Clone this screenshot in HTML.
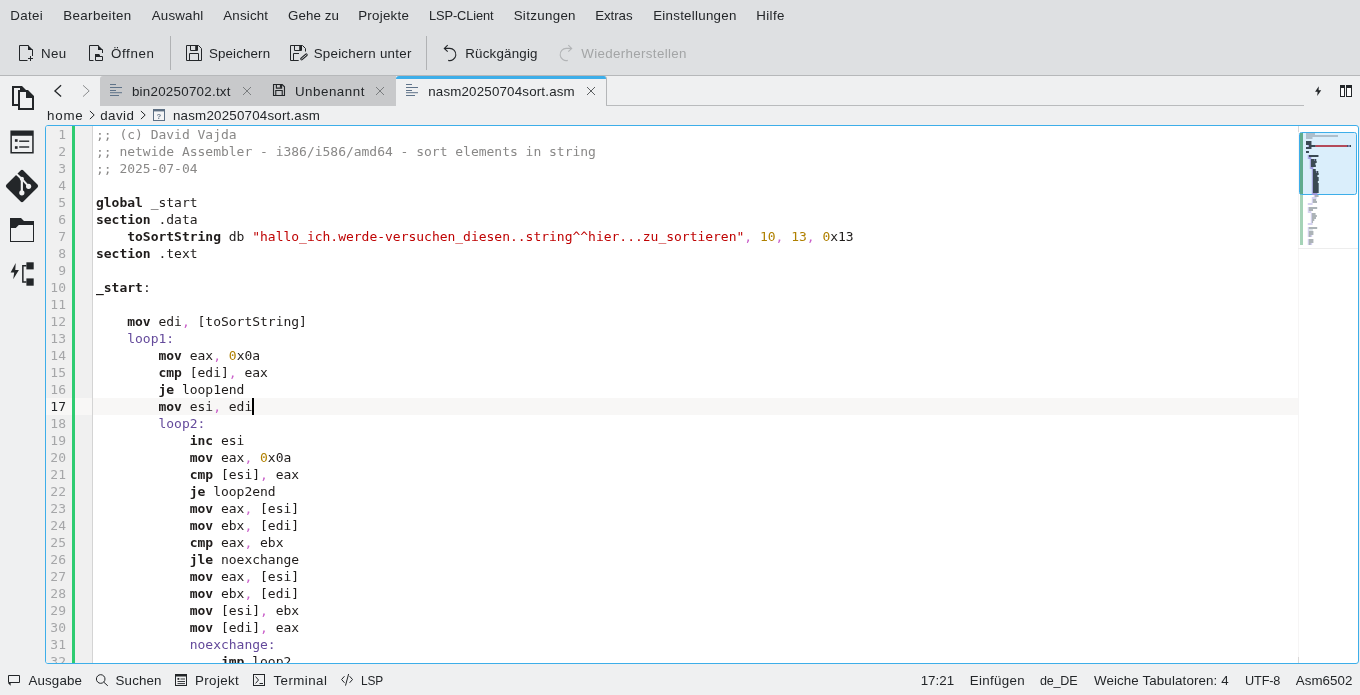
<!DOCTYPE html>
<html lang="de">
<head>
<meta charset="utf-8">
<title>nasm20250704sort.asm — Kate</title>
<style>
*{box-sizing:border-box;margin:0;padding:0}
html,body{width:1360px;height:695px;overflow:hidden}
body{position:relative;background:#eff0f1;font-family:"Liberation Sans","DejaVu Sans",sans-serif;font-size:13.333px;color:#232629;line-height:16px}
#wrap{position:absolute;left:0;top:0;width:1360px;height:695px;will-change:transform}
#header{position:absolute;left:0;top:0;width:1360px;height:75px;background:#dee0e2}
#hline{position:absolute;left:0;top:75px;width:1360px;height:1px;background:#b6b8ba}
.t{position:absolute;white-space:pre;height:16px;line-height:16px;transform-origin:0 50%}
.dis{color:#a3a5a6}
.vsep{position:absolute;width:1px;background:#b0b2b4;top:36px;height:34px}
/* tabs */
#tabsbg{position:absolute;left:100px;top:76px;width:296px;height:30px;background:#c8c9cb;border-top-left-radius:3px}
#tabact{position:absolute;left:396px;top:76px;width:211px;height:30px;background:#eff0f1;border-right:1px solid #b4b6b8;border-top-left-radius:3px;border-top-right-radius:3px;overflow:hidden}
#tabact:before{content:"";position:absolute;left:0;top:0;width:211px;height:3px;background:#3daee9}
#tabline{position:absolute;left:606px;top:105px;width:698px;height:1px;background:#b9bbbd}
/* editor */
#ed{position:absolute;left:45px;top:125px;width:1314px;height:539px;border:1px solid #3daee9;border-radius:3px;background:#fff;overflow:hidden}
#gutter{position:absolute;left:0;top:0;width:46px;height:537px;background:#f0f0f0}
#gsep{position:absolute;left:46px;top:0;width:1px;height:537px;background:#d4d4d4}
#green{position:absolute;left:26px;top:0;width:3px;height:537px;background:#2ecc71}
#nums{position:absolute;left:0;top:0;width:20px}
#gcur{position:absolute;left:0;top:272px;width:46px;height:17px;background:#f8f7f6}
.ln{height:17px;line-height:17px;text-align:right;font-family:"DejaVu Sans Mono","Liberation Mono",monospace;font-size:13px;color:#a5a6a8}
.ln.cur{color:#232629}
#code{position:absolute;left:50px;top:0;width:1202px}
.cl{height:17px;line-height:17px;white-space:pre;letter-spacing:-0.016px;font-family:"DejaVu Sans Mono","Liberation Mono",monospace;font-size:13px;color:#1f1c1b}
.cl.curl{background:#f8f7f6;margin-left:-3px;padding-left:3px}
.k{font-weight:bold}
.c{color:#898887}
.s{color:#bf0303}
.d{color:#b08000}
.o{color:#ca60ca}
.l{color:#644a9b}
.caret{position:absolute;left:156px;top:272px;width:2px;height:17px;background:#000}
#mmsep{position:absolute;left:1252px;top:0;width:1px;height:537px;background:linear-gradient(#d9d7d7 0,#d9d7d7 6px,#f6f5f5 6px,#f6f5f5 531px,#d9d7d7 531px)}
#mm{position:absolute;left:1253px;top:0;width:59px;height:537px}
#status{position:absolute;left:0;top:664px;width:1360px;height:32px;background:#eff0f1}
svg{position:absolute;overflow:visible}
</style>
</head>
<body>
<div id="wrap">
<div id="header"></div>
<div id="hline"></div>

<!-- menu -->

<!-- toolbar -->
<div class="vsep" style="left:170px"></div>
<div class="vsep" style="left:426px"></div>

<!-- tabs -->
<div id="tabsbg"></div>
<div id="tabact"></div>
<div id="tabline"></div>

<!-- breadcrumb -->

<!-- editor -->
<div id="ed">
  <div id="gutter"></div>
  <div id="gcur"></div>
  <div id="green"></div>
  <div id="gsep"></div>
  <div id="nums">
<div class="ln">1</div>
<div class="ln">2</div>
<div class="ln">3</div>
<div class="ln">4</div>
<div class="ln">5</div>
<div class="ln">6</div>
<div class="ln">7</div>
<div class="ln">8</div>
<div class="ln">9</div>
<div class="ln">10</div>
<div class="ln">11</div>
<div class="ln">12</div>
<div class="ln">13</div>
<div class="ln">14</div>
<div class="ln">15</div>
<div class="ln">16</div>
<div class="ln cur">17</div>
<div class="ln">18</div>
<div class="ln">19</div>
<div class="ln">20</div>
<div class="ln">21</div>
<div class="ln">22</div>
<div class="ln">23</div>
<div class="ln">24</div>
<div class="ln">25</div>
<div class="ln">26</div>
<div class="ln">27</div>
<div class="ln">28</div>
<div class="ln">29</div>
<div class="ln">30</div>
<div class="ln">31</div>
<div class="ln">32</div>
  </div>
  <div id="code">
<div class="cl"><span class="c">;; (c) David Vajda</span></div>
<div class="cl"><span class="c">;; netwide Assembler - i386/i586/amd64 - sort elements in string</span></div>
<div class="cl"><span class="c">;; 2025-07-04</span></div>
<div class="cl"></div>
<div class="cl"><span class="k">global</span> _start</div>
<div class="cl"><span class="k">section</span> .data</div>
<div class="cl">    <span class="k">toSortString</span> db <span class="s">"hallo_ich.werde-versuchen_diesen..string^^hier...zu_sortieren"</span><span class="o">,</span> <span class="d">10</span><span class="o">,</span> <span class="d">13</span><span class="o">,</span> <span class="d">0</span>x13</div>
<div class="cl"><span class="k">section</span> .text</div>
<div class="cl"></div>
<div class="cl"><span class="k">_start</span>:</div>
<div class="cl"></div>
<div class="cl">    <span class="k">mov</span> edi<span class="o">,</span> [toSortString]</div>
<div class="cl">    <span class="l">loop1:</span></div>
<div class="cl">        <span class="k">mov</span> eax<span class="o">,</span> <span class="d">0</span>x0a</div>
<div class="cl">        <span class="k">cmp</span> [edi]<span class="o">,</span> eax</div>
<div class="cl">        <span class="k">je</span> loop1end</div>
<div class="cl curl">        <span class="k">mov</span> esi<span class="o">,</span> edi<i class="caret"></i></div>
<div class="cl">        <span class="l">loop2:</span></div>
<div class="cl">            <span class="k">inc</span> esi</div>
<div class="cl">            <span class="k">mov</span> eax<span class="o">,</span> <span class="d">0</span>x0a</div>
<div class="cl">            <span class="k">cmp</span> [esi]<span class="o">,</span> eax</div>
<div class="cl">            <span class="k">je</span> loop2end</div>
<div class="cl">            <span class="k">mov</span> eax<span class="o">,</span> [esi]</div>
<div class="cl">            <span class="k">mov</span> ebx<span class="o">,</span> [edi]</div>
<div class="cl">            <span class="k">cmp</span> eax<span class="o">,</span> ebx</div>
<div class="cl">            <span class="k">jle</span> noexchange</div>
<div class="cl">            <span class="k">mov</span> eax<span class="o">,</span> [esi]</div>
<div class="cl">            <span class="k">mov</span> ebx<span class="o">,</span> [edi]</div>
<div class="cl">            <span class="k">mov</span> [esi]<span class="o">,</span> ebx</div>
<div class="cl">            <span class="k">mov</span> [edi]<span class="o">,</span> eax</div>
<div class="cl">            <span class="l">noexchange:</span></div>
<div class="cl">                <span class="k">jmp</span> loop2</div>
  </div>
  <div id="mmsep"></div>
  <div id="mm"></div>
</div>

<!-- status -->
<div id="status"></div>
<span class="t" style="left:10.30px;top:8px;letter-spacing:0.332px">Datei</span>
<span class="t" style="left:63.15px;top:8px;letter-spacing:0.401px">Bearbeiten</span>
<span class="t" style="left:151.82px;top:8px;letter-spacing:0.170px">Auswahl</span>
<span class="t" style="left:223.32px;top:8px;letter-spacing:0.167px">Ansicht</span>
<span class="t" style="left:287.94px;top:8px;letter-spacing:0.086px">Gehe zu</span>
<span class="t" style="left:358.15px;top:8px;letter-spacing:0.265px">Projekte</span>
<span class="t" style="left:428.90px;top:8px;letter-spacing:-0.121px;transform:scaleX(0.9622)">LSP-CLient</span>
<span class="t" style="left:513.65px;top:8px;letter-spacing:0.326px">Sitzungen</span>
<span class="t" style="left:595.20px;top:8px;letter-spacing:-0.073px">Extras</span>
<span class="t" style="left:653.15px;top:8px;letter-spacing:0.268px">Einstellungen</span>
<span class="t" style="left:756.20px;top:8px;letter-spacing:0.398px">Hilfe</span>
<span class="t" style="left:40.90px;top:46px;letter-spacing:0.460px">Neu</span>
<span class="t" style="left:110.99px;top:46px;letter-spacing:0.620px">Öffnen</span>
<span class="t" style="left:208.90px;top:46px;letter-spacing:0.149px">Speichern</span>
<span class="t" style="left:313.65px;top:46px;letter-spacing:0.259px">Speichern unter</span>
<span class="t" style="left:465.30px;top:46px;letter-spacing:0.199px">Rückgängig</span>
<span class="t dis" style="left:581.36px;top:46px;letter-spacing:0.334px">Wiederherstellen</span>
<span class="t" style="left:131.90px;top:84px;letter-spacing:0.267px">bin20250702.txt</span>
<span class="t" style="left:294.90px;top:84px;letter-spacing:0.532px">Unbenannt</span>
<span class="t" style="left:428.20px;top:84px;letter-spacing:0.185px">nasm20250704sort.asm</span>
<span class="t" style="left:47.00px;top:108px;letter-spacing:0.806px">home</span>
<span class="t" style="left:100.27px;top:108px;letter-spacing:0.422px">david</span>
<span class="t" style="left:173.00px;top:108px;letter-spacing:0.208px">nasm20250704sort.asm</span>
<span class="t" style="left:28.57px;top:673px;letter-spacing:0.115px">Ausgabe</span>
<span class="t" style="left:115.60px;top:673px;letter-spacing:0.124px">Suchen</span>
<span class="t" style="left:195.00px;top:673px;letter-spacing:0.383px">Projekt</span>
<span class="t" style="left:273.54px;top:673px;letter-spacing:0.423px">Terminal</span>
<span class="t" style="left:361.20px;top:673px;letter-spacing:-0.099px;transform:scaleX(0.8921)">LSP</span>
<span class="t" style="left:920.70px;top:673px">17:21</span>
<span class="t" style="left:969.70px;top:673px;letter-spacing:0.350px">Einfügen</span>
<span class="t" style="left:1040.12px;top:673px;letter-spacing:-0.233px;transform:scaleX(0.9437)">de_DE</span>
<span class="t" style="left:1093.91px;top:673px;letter-spacing:0.131px">Weiche Tabulatoren: 4</span>
<span class="t" style="left:1244.80px;top:673px;letter-spacing:-0.158px;transform:scaleX(0.9532)">UTF-8</span>
<span class="t" style="left:1295.77px;top:673px;letter-spacing:0.065px">Asm6502</span>
<svg id="icons" width="1360" height="695" viewBox="0 0 1360 695" style="left:0;top:0">
<g fill="none" stroke="#232629" stroke-width="1">
 <!-- toolbar: Neu -->
 <path d="M28.5,45.5H19.5V60.5H27.5M32.5,49.5V56"/>
 <path d="M28,45L33,50H28Z" fill="#232629" stroke="none"/>
 <path d="M28,58.5H33M30.5,56V61"/>
 <!-- toolbar: Oeffnen -->
 <path d="M98.5,45.5H89.5V60.5H93.5M102.5,49.5V53"/>
 <path d="M98,45L103,50H98Z" fill="#232629" stroke="none"/>
 <path d="M95.5,56.5H102.5V60.5H95.5Z"/>
 <path d="M95,54H99L100,55V57H95Z" fill="#232629" stroke="none"/>
 <!-- toolbar: Speichern -->
 <g transform="translate(186,45)">
  <path d="M0.5,0.5H12.5L15.5,3.5V15.5H0.5Z"/>
  <path d="M4.5,0.5V5.5H11.5V0.5"/>
  <path d="M9.2,1H11.5V5H9.2Z" fill="#232629" stroke="none"/>
  <path d="M3.5,15.5V8.5H12.5V15.5"/>
 </g>
 <!-- toolbar: Speichern unter -->
 <g transform="translate(290,45)">
  <path d="M8.7,15.5H0.5V0.5H12.5L15.5,3.5V6.5"/>
  <path d="M4.5,0.5V5.5H11.5V0.5"/>
  <path d="M9.2,1H11.5V5H9.2Z" fill="#232629" stroke="none"/>
  <path d="M3.5,15.5V8.5H9"/>
  <path d="M11.6,13.9L16.3,9.9" stroke-width="2.9" stroke-linecap="round"/>
  <path d="M11.6,13.9L16.3,9.9" stroke="#dee0e2" stroke-width="0.9" stroke-linecap="round"/>
 </g>
 <!-- undo -->
 <path d="M447.7,45.1L444.3,48.4L447.7,51.7M444.5,48.4H449.6A6.1,6.1 0 1 1 448.2,60.4" stroke-width="1.1"/>
 <!-- redo (disabled) -->
 <path d="M568.3,45.1L571.7,48.4L568.3,51.7M571.5,48.4H566.4A6.1,6.1 0 1 0 567.8,60.4" stroke="#b2b4b6" stroke-width="1.1"/>
 <!-- nav arrows -->
 <path d="M61.1,85.3L54.9,90.9L61.1,96.6" stroke-width="1.3"/>
 <path d="M83,85.3L89.2,90.9L83,96.6" stroke="#8a8c8e" stroke-width="1"/>
</g>

<!-- tab icons -->
<g fill="#5f7389">
 <g id="tl1"><rect x="110" y="84" width="6" height="1"/><rect x="110" y="87" width="12" height="1"/><rect x="110" y="90" width="6" height="1"/><rect x="110" y="92.2" width="12" height="1"/><rect x="110" y="95" width="9" height="1"/></g>
 <g transform="translate(296,0)"><rect x="110" y="84" width="6" height="1"/><rect x="110" y="87" width="12" height="1"/><rect x="110" y="90" width="6" height="1"/><rect x="110" y="92.2" width="12" height="1"/><rect x="110" y="95" width="9" height="1"/></g>
</g>
<!-- tab2 floppy 12px -->
<g transform="translate(273,84) scale(0.75)" fill="none" stroke="#232629" stroke-width="1.5">
  <path d="M0.7,0.7H12.3L15.3,3.7V15.3H0.7Z"/>
  <path d="M4.5,0.7V5.5H11.5V0.7"/>
  <path d="M9.2,1H11.5V5H9.2Z" fill="#232629" stroke="none"/>
  <path d="M3.7,15.3V8.7H12.3V15.3"/>
</g>
<!-- tab close buttons -->
<g fill="none" stroke="#7a7d7f" stroke-width="1">
 <path d="M243,87L251,95M251,87L243,95"/>
 <path d="M376,87L384,95M384,87L376,95"/>
 <path d="M587,87L595,95M595,87L587,95" stroke="#5c5f61"/>
</g>
<!-- right of tab bar: bolt + split -->
<path d="M1318.8,86.3L1315.1,91.8H1317.6L1317.2,95.9L1321.2,90.3H1318.6Z" fill="#232629"/>
<g fill="#fcfcfc" stroke="#232629" stroke-width="1">
 <rect x="1340.5" y="85.5" width="4" height="11"/>
 <rect x="1346.5" y="85.5" width="5" height="11"/>
</g>
<rect x="1340" y="85" width="5" height="3" fill="#232629"/>
<rect x="1346" y="85" width="6" height="3" fill="#232629"/>
<!-- breadcrumb -->
<g fill="none" stroke="#232629" stroke-width="1">
 <path d="M89.9,111L94.2,115L89.9,119.1"/>
 <path d="M140.9,111L145.2,115L140.9,119.1"/>
</g>
<g>
 <rect x="153.5" y="109.5" width="11" height="11" fill="#f4f5f6" stroke="#5d6f83"/>
 <rect x="153" y="109" width="12" height="2.4" fill="#5d6f83"/>
 <text x="159" y="118.6" font-family="Liberation Sans,DejaVu Sans,sans-serif" font-size="7.8" font-weight="bold" fill="#6b7b8d" text-anchor="middle">?</text>
</g>

<!-- sidebar icons -->
<g fill="#232629" fill-rule="evenodd">
 <!-- documents -->
 <path d="M12,86H22L26,90H18V106H12ZM14,88V104H18V90H20V88Z"/>
 <path d="M18,90H28L34,96V110H18ZM20,92V108H32V98H26V92Z"/>
 <!-- list -->
 <path d="M10.4,130.4H33.7V153.6H10.4ZM11.9,135.7V152.1H32.2V135.7Z"/>
 <rect x="14.9" y="139.2" width="2.7" height="2.6"/><rect x="14.9" y="146.2" width="2.7" height="2.6"/>
 <rect x="19.2" y="140.5" width="10" height="1.4"/><rect x="19.2" y="146.3" width="10" height="1.4"/>
 <!-- git -->
 <rect x="-11.95" y="-11.95" width="23.9" height="23.9" rx="2" transform="translate(22,186) rotate(45)"/>
 <!-- folder -->
 <path d="M10,218H21L24,221H34V242H10ZM11,228V241H33V225H18.8L15.8,228Z"/>
 <!-- lsp -->
 <path d="M15.7,263L10.6,272.4H14.2L13.2,279.3L18.9,269.9H15.3Z"/>
 <rect x="26.4" y="262.3" width="7.3" height="7.1"/><rect x="26.4" y="278.4" width="7.3" height="7.3"/>
 <path d="M22.1,265H26.4V266.5H23.6V281.2H26.4V282.7H22.1Z"/>
</g>
<g stroke="#eff0f1" fill="#eff0f1" stroke-linecap="butt">
 <path d="M15.6,173.3L21.85,179" stroke-width="2" fill="none"/>
 <path d="M21.85,178V192.8" stroke-width="2.2" fill="none"/>
 <path d="M22.3,179.4L28.6,186.3" stroke-width="2" fill="none"/>
 <circle cx="21.85" cy="192.8" r="2.6" stroke="none"/><circle cx="28.6" cy="186.3" r="2.6" stroke="none"/><circle cx="21.85" cy="178.8" r="2.1" stroke="none"/>
</g>
<!-- status icons -->
<g fill="none" stroke="#232629" stroke-width="1">
 <path d="M8.5,675.5H19.5V682.5H8.5Z"/>
 <path d="M8,683L10.6,685.8V683Z" fill="#232629" stroke="none"/>
 <circle cx="100.7" cy="679" r="4.3"/><path d="M103.8,682.2L107.8,685.8"/>
 <rect x="175.5" y="674.5" width="11" height="11"/><rect x="175" y="674" width="12" height="2.5" fill="#232629" stroke="none"/>
 <rect x="177.5" y="678" width="1.8" height="1.8" fill="#232629" stroke="none"/>
 <path d="M180.5,679H185M177.5,681.5H185M177.5,683.6H185" stroke-width="0.9"/>
 <rect x="253.5" y="674.5" width="11" height="11"/>
 <path d="M255.6,676.6L258.5,680L255.6,683.4M259.5,683.5H263"/>
 <path d="M344.5,676.2L341.6,679.5L344.5,682.8M348.6,674L345.5,685.6M349.6,676.2L352.5,679.5L349.6,682.8"/>
</g>

<!-- minimap -->
<rect x="1298" y="248" width="60" height="1" fill="#ededed"/>
<rect x="1300" y="133" width="3" height="112" fill="#a5d3b7"/>
<rect x="1299.5" y="132.5" width="57" height="62" rx="2" ry="2" fill="#daeefb" stroke="#3daee9"/>
<rect x="1300" y="133" width="3" height="61" fill="#5fab8d"/>
<g shape-rendering="auto">
<rect x="1306.00" y="133.0" width="9.00" height="2.0" fill="#adbecb"/>
<rect x="1306.00" y="135.0" width="32.00" height="2.0" fill="#adbecb"/>
<rect x="1306.00" y="137.0" width="6.50" height="2.0" fill="#adbecb"/>
<rect x="1306.00" y="141.0" width="5.46" height="2.0" fill="#3a4953"/>
<rect x="1306.00" y="143.0" width="5.46" height="2.0" fill="#3a4953"/>
<rect x="1308.80" y="145.0" width="6.97" height="2.0" fill="#3a4953"/>
<rect x="1315.52" y="145.0" width="31.75" height="2.0" fill="#b44a5a"/>
<rect x="1347.02" y="145.0" width="1.09" height="2.0" fill="#3a4953"/>
<rect x="1347.86" y="145.0" width="1.09" height="2.0" fill="#9b97dc"/>
<rect x="1348.70" y="145.0" width="1.09" height="2.0" fill="#3a4953"/>
<rect x="1349.54" y="145.0" width="1.09" height="2.0" fill="#9b97dc"/>
<rect x="1350.38" y="145.0" width="0.62" height="2.0" fill="#3a4953"/>
<rect x="1307.80" y="145.0" width="1" height="2.0" fill="#9b97dc" opacity="0.9"/>
<rect x="1306.00" y="147.0" width="5.46" height="2.0" fill="#3a4953"/>
<rect x="1306.00" y="151.0" width="2.94" height="2.0" fill="#3a4953"/>
<rect x="1308.80" y="155.0" width="9.66" height="2.0" fill="#3a4953"/>
<rect x="1307.80" y="155.0" width="1" height="2.0" fill="#9b97dc" opacity="0.9"/>
<rect x="1308.80" y="157.0" width="2.52" height="2.0" fill="#9b97dc"/>
<rect x="1307.80" y="157.0" width="1" height="2.0" fill="#9b97dc" opacity="0.9"/>
<rect x="1310.80" y="159.0" width="4.03" height="2.0" fill="#3a4953"/>
<rect x="1314.58" y="159.0" width="0.67" height="2.0" fill="#9b97dc"/>
<rect x="1315.00" y="159.0" width="1.26" height="2.0" fill="#3a4953"/>
<rect x="1309.80" y="159.0" width="1" height="2.0" fill="#9b97dc" opacity="0.9"/>
<rect x="1310.80" y="161.0" width="5.88" height="2.0" fill="#3a4953"/>
<rect x="1309.80" y="161.0" width="1" height="2.0" fill="#9b97dc" opacity="0.9"/>
<rect x="1310.80" y="163.0" width="4.62" height="2.0" fill="#3a4953"/>
<rect x="1309.80" y="163.0" width="1" height="2.0" fill="#9b97dc" opacity="0.9"/>
<rect x="1310.80" y="165.0" width="5.04" height="2.0" fill="#3a4953"/>
<rect x="1309.80" y="165.0" width="1" height="2.0" fill="#9b97dc" opacity="0.9"/>
<rect x="1310.80" y="167.0" width="2.52" height="2.0" fill="#9b97dc"/>
<rect x="1309.80" y="167.0" width="1" height="2.0" fill="#9b97dc" opacity="0.9"/>
<rect x="1312.80" y="169.0" width="2.94" height="2.0" fill="#3a4953"/>
<rect x="1311.80" y="169.0" width="1" height="2.0" fill="#9b97dc" opacity="0.9"/>
<rect x="1312.80" y="171.0" width="4.03" height="2.0" fill="#3a4953"/>
<rect x="1316.58" y="171.0" width="0.67" height="2.0" fill="#9b97dc"/>
<rect x="1317.00" y="171.0" width="1.26" height="2.0" fill="#3a4953"/>
<rect x="1311.80" y="171.0" width="1" height="2.0" fill="#9b97dc" opacity="0.9"/>
<rect x="1312.80" y="173.0" width="5.88" height="2.0" fill="#3a4953"/>
<rect x="1311.80" y="173.0" width="1" height="2.0" fill="#9b97dc" opacity="0.9"/>
<rect x="1312.80" y="175.0" width="4.62" height="2.0" fill="#3a4953"/>
<rect x="1311.80" y="175.0" width="1" height="2.0" fill="#9b97dc" opacity="0.9"/>
<rect x="1312.80" y="177.0" width="5.88" height="2.0" fill="#3a4953"/>
<rect x="1311.80" y="177.0" width="1" height="2.0" fill="#9b97dc" opacity="0.9"/>
<rect x="1312.80" y="179.0" width="5.88" height="2.0" fill="#3a4953"/>
<rect x="1311.80" y="179.0" width="1" height="2.0" fill="#9b97dc" opacity="0.9"/>
<rect x="1312.80" y="181.0" width="5.04" height="2.0" fill="#3a4953"/>
<rect x="1311.80" y="181.0" width="1" height="2.0" fill="#9b97dc" opacity="0.9"/>
<rect x="1312.80" y="183.0" width="5.88" height="2.0" fill="#3a4953"/>
<rect x="1311.80" y="183.0" width="1" height="2.0" fill="#9b97dc" opacity="0.9"/>
<rect x="1312.80" y="185.0" width="5.88" height="2.0" fill="#3a4953"/>
<rect x="1311.80" y="185.0" width="1" height="2.0" fill="#9b97dc" opacity="0.9"/>
<rect x="1312.80" y="187.0" width="5.88" height="2.0" fill="#3a4953"/>
<rect x="1311.80" y="187.0" width="1" height="2.0" fill="#9b97dc" opacity="0.9"/>
<rect x="1312.80" y="189.0" width="5.88" height="2.0" fill="#3a4953"/>
<rect x="1311.80" y="189.0" width="1" height="2.0" fill="#9b97dc" opacity="0.9"/>
<rect x="1312.80" y="191.0" width="5.88" height="2.0" fill="#3a4953"/>
<rect x="1311.80" y="191.0" width="1" height="2.0" fill="#9b97dc" opacity="0.9"/>
<rect x="1312.80" y="193.0" width="4.62" height="2.0" fill="#9b97dc"/>
<rect x="1311.80" y="193.0" width="1" height="2.0" fill="#9b97dc" opacity="0.9"/>
<rect x="1314.80" y="195.0" width="3.78" height="2.0" fill="#3a4953" opacity="0.42"/>
<rect x="1313.80" y="195.0" width="1" height="2.0" fill="#9b97dc" opacity="0.45"/>
<rect x="1312.80" y="197.0" width="3.78" height="2.0" fill="#9b97dc" opacity="0.42"/>
<rect x="1311.80" y="197.0" width="1" height="2.0" fill="#9b97dc" opacity="0.45"/>
<rect x="1312.80" y="199.0" width="3.36" height="2.0" fill="#3a4953" opacity="0.42"/>
<rect x="1311.80" y="199.0" width="1" height="2.0" fill="#9b97dc" opacity="0.45"/>
<rect x="1312.80" y="201.0" width="4.20" height="2.0" fill="#3a4953" opacity="0.42"/>
<rect x="1311.80" y="201.0" width="1" height="2.0" fill="#9b97dc" opacity="0.45"/>
<rect x="1308.80" y="203.0" width="3.78" height="2.0" fill="#9b97dc" opacity="0.42"/>
<rect x="1307.80" y="203.0" width="1" height="2.0" fill="#9b97dc" opacity="0.45"/>
<rect x="1308.80" y="207.0" width="8.40" height="2.0" fill="#3a4953" opacity="0.42"/>
<rect x="1307.80" y="207.0" width="1" height="2.0" fill="#9b97dc" opacity="0.45"/>
<rect x="1308.80" y="209.0" width="4.20" height="2.0" fill="#3a4953" opacity="0.42"/>
<rect x="1307.80" y="209.0" width="1" height="2.0" fill="#9b97dc" opacity="0.45"/>
<rect x="1308.80" y="211.0" width="2.52" height="2.0" fill="#9b97dc" opacity="0.42"/>
<rect x="1307.80" y="211.0" width="1" height="2.0" fill="#9b97dc" opacity="0.45"/>
<rect x="1311.80" y="213.0" width="3.78" height="2.0" fill="#3a4953" opacity="0.42"/>
<rect x="1310.80" y="213.0" width="1" height="2.0" fill="#9b97dc" opacity="0.45"/>
<rect x="1311.80" y="215.0" width="5.04" height="2.0" fill="#3a4953" opacity="0.42"/>
<rect x="1310.80" y="215.0" width="1" height="2.0" fill="#9b97dc" opacity="0.45"/>
<rect x="1311.80" y="217.0" width="4.20" height="2.0" fill="#3a4953" opacity="0.42"/>
<rect x="1310.80" y="217.0" width="1" height="2.0" fill="#9b97dc" opacity="0.45"/>
<rect x="1311.80" y="219.0" width="2.52" height="2.0" fill="#3a4953" opacity="0.42"/>
<rect x="1310.80" y="219.0" width="1" height="2.0" fill="#9b97dc" opacity="0.45"/>
<rect x="1311.80" y="221.0" width="1.26" height="2.0" fill="#3a4953" opacity="0.42"/>
<rect x="1310.80" y="221.0" width="1" height="2.0" fill="#9b97dc" opacity="0.45"/>
<rect x="1308.80" y="223.0" width="3.78" height="2.0" fill="#9b97dc" opacity="0.42"/>
<rect x="1307.80" y="223.0" width="1" height="2.0" fill="#9b97dc" opacity="0.45"/>
<rect x="1308.80" y="227.0" width="8.40" height="2.0" fill="#3a4953" opacity="0.42"/>
<rect x="1307.80" y="227.0" width="1" height="2.0" fill="#9b97dc" opacity="0.45"/>
<rect x="1308.80" y="229.0" width="4.00" height="2.0" fill="#adbecb" opacity="0.42"/>
<rect x="1307.80" y="229.0" width="1" height="2.0" fill="#9b97dc" opacity="0.45"/>
<rect x="1308.80" y="231.0" width="4.62" height="2.0" fill="#3a4953" opacity="0.42"/>
<rect x="1307.80" y="231.0" width="1" height="2.0" fill="#9b97dc" opacity="0.45"/>
<rect x="1308.80" y="233.0" width="4.62" height="2.0" fill="#3a4953" opacity="0.42"/>
<rect x="1307.80" y="233.0" width="1" height="2.0" fill="#9b97dc" opacity="0.45"/>
<rect x="1308.80" y="235.0" width="1.93" height="2.0" fill="#3a4953" opacity="0.42"/>
<rect x="1310.48" y="235.0" width="1.68" height="2.0" fill="#9b97dc" opacity="0.42"/>
<rect x="1307.80" y="235.0" width="1" height="2.0" fill="#9b97dc" opacity="0.45"/>
<rect x="1308.80" y="239.0" width="4.62" height="2.0" fill="#3a4953" opacity="0.42"/>
<rect x="1307.80" y="239.0" width="1" height="2.0" fill="#9b97dc" opacity="0.45"/>
<rect x="1308.80" y="241.0" width="4.62" height="2.0" fill="#3a4953" opacity="0.42"/>
<rect x="1307.80" y="241.0" width="1" height="2.0" fill="#9b97dc" opacity="0.45"/>
<rect x="1308.80" y="243.0" width="1.93" height="2.0" fill="#3a4953" opacity="0.42"/>
<rect x="1310.48" y="243.0" width="1.68" height="2.0" fill="#9b97dc" opacity="0.42"/>
<rect x="1307.80" y="243.0" width="1" height="2.0" fill="#9b97dc" opacity="0.45"/>
<rect x="1350" y="145" width="1" height="2" fill="#36454f"/>
</g>
</svg>

</div>
</body>
</html>
